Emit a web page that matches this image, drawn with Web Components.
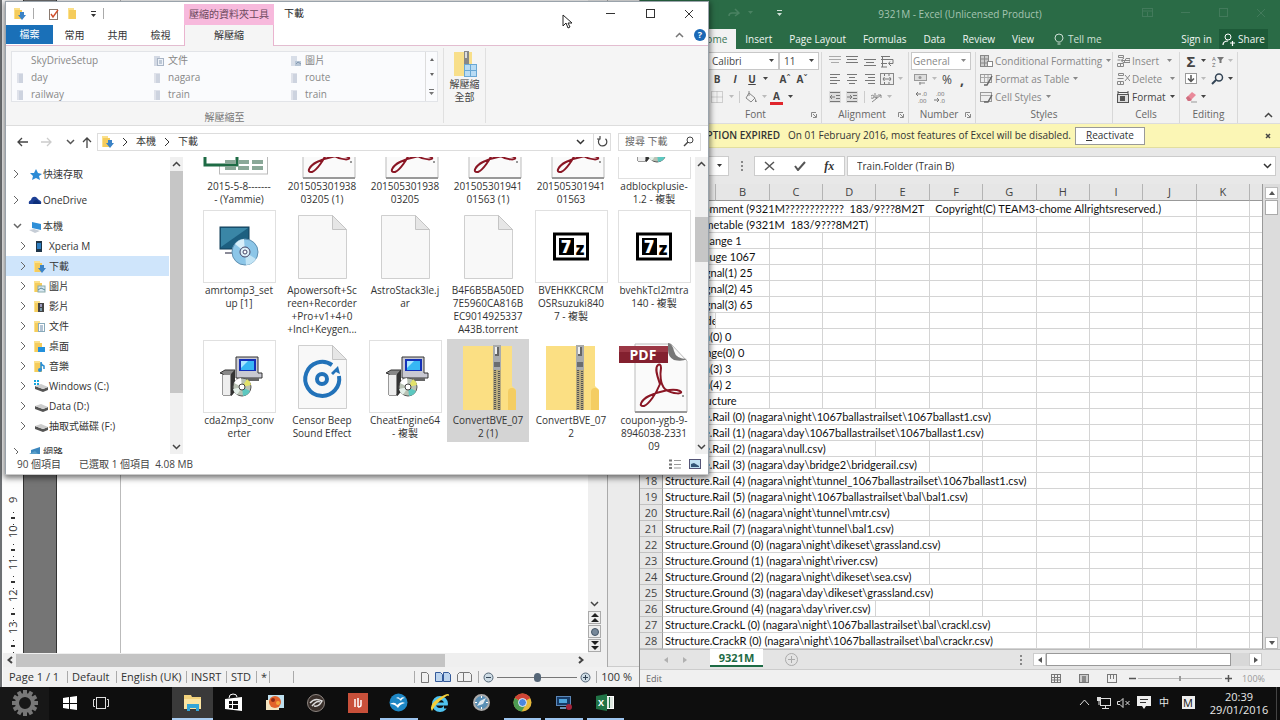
<!DOCTYPE html>
<html lang="zh-Hant">
<head>
<meta charset="utf-8">
<title>Desktop</title>
<style>
html,body{margin:0;height:100%}
body{font:10px/13px "Open Sans","Noto Sans CJK TC",sans-serif;color:#333;background:#6d7073;overflow:hidden}
</style>
</head>
<body>
<desk-top></desk-top>
<script>
const BASE = `*{box-sizing:border-box}button,input,select{font:inherit;color:inherit;border:0;padding:0;margin:0;background:none;outline:0;border-radius:0}
button{display:inline-flex;align-items:center;justify-content:center;white-space:nowrap}a{color:inherit;text-decoration:none}
input{min-width:0}`;
const define = (name, css, html) => customElements.define(name, class extends HTMLElement {
  connectedCallback() {
    if (this.shadowRoot) return;
    this.attachShadow({mode: 'open'}).innerHTML = `<style>${BASE}${css}</style>` + (typeof html === 'function' ? html(this) : html);
  }
});

/* ---------- icons: name -> [width, height, markup] ---------- */
const line = (d, c = '#555', w = 1) => `<path d="${d}" fill="none" stroke="${c}" stroke-width="${w}"/>`;
const rect = (x, y, w, h, f, s) => `<rect x="${x}" y="${y}" width="${w}" height="${h}" fill="${f || 'none'}"${s ? ` stroke="${s}"` : ''}/>`;
const folder = extra => `${rect(1, 1, 6, 11, '#fbe08a')}<path d="M2 3h7v9H2z" fill="#f5cc5c"/>${extra}`;
const paper = `<path d="M12.5 5.5h34l14 14v49h-48z" fill="#f8f8f8" stroke="#cfcfcf"/><path d="M46.5 5.5v14h14z" fill="#e6e6e6" stroke="#c4c4c4"/>`;
const zip = `<path d="M11 6h49v40l4 4v18q0 2-2 2H11z" fill="#fbdf83"/><path d="M60 48q4 0 4 4v18h-8V52q0-4 4-4z" fill="#f4cd62"/>
<rect x="41" y="5" width="8" height="65" fill="#b9ab7d"/><path d="M43 30v40M47 31v39" stroke="#555" stroke-width="2" stroke-dasharray="1 1"/><rect x="41" y="5" width="8" height="25" rx="1" fill="#a9abad"/><rect x="43" y="7" width="4" height="9" fill="#666"/><rect x="43" y="7" width="2" height="7" fill="#eee"/><rect x="42" y="22" width="6" height="5" fill="#6b6d70"/>`;
const pdfMark = '<path d="M40 25C36 28 40 38 42 44C38 54 31 64 26 66C20 67 23 60 31 56C42 51 55 48 62 51C67 54 55 55 47 49C42 44 42 34 43 28C43 24 41 24 40 25Z" fill="none" stroke="#8a1624" stroke-width="2"/><circle cx="65" cy="56" r="1" fill="#777"/>';
const pdf = `<path d="M17 4h36l16 17v51H17z" fill="#fafafa" stroke="#bbb"/><path d="M17 72h52" stroke="#999" stroke-width="2"/><path d="M50 3q4 0 6 8t13 8q-5 3-13 1-6-3-6-10z" fill="#777"/><rect x="1" y="6" width="49" height="17" fill="#83202f"/><path d="M1 6h49v6H1z" fill="#9b3745"/><text x="25" y="20" text-anchor="middle" font-family="Open Sans" font-size="14" font-weight="700" fill="#fff">PDF</text>${pdfMark}`;
const frame = '<rect x=".5" y=".5" width="72" height="72" fill="#fff" stroke="#e0e0e0"/>';
const installer = `${frame}<path d="M33 17h22v16h4v5H33z" fill="#c9c9d2" stroke="#333"/><path d="M36 19h17v12H36z" fill="#1431b8"/><path d="M38 21h13v9H38z" fill="#37b7f4"/><path d="M38 21h7l-7 7z" fill="#a8e6ff"/><path d="M34 38h22v3H34z" fill="#666"/>
<path d="M17 33l5-3h10l-3 4v21h-9V34z" fill="#888" stroke="#333"/><path d="M20 35h7v20h-7z" fill="#eee"/><path d="M28 34l4-4v22l-4 4z" fill="#333"/><circle cx="39" cy="47" r="9" fill="#b9c2b4" stroke="#555"/><path d="M39 47l-8-4a9 9 0 0 1 7-5z" fill="#fff"/><path d="M39 47l8 4a9 9 0 0 1-7 5z" fill="#5cc8c0"/><path d="M39 47l5-8a9 9 0 0 1 4 6z" fill="#e2e26a"/><path d="M39 47l-5 8a9 9 0 0 1-4-6z" fill="#e3efe8"/><circle cx="39" cy="47" r="3" fill="#fff" stroke="#444"/>`;
const seven = `${frame}<rect x="19.5" y="24" width="33" height="25" fill="#fff" stroke="#000" stroke-width="3"/><rect x="24" y="28" width="15" height="17" fill="#000"/><text x="31" y="43" text-anchor="middle" font-family="Open Sans" font-size="17" font-weight="800" fill="#fff">7</text><text x="45" y="45" text-anchor="middle" font-family="Open Sans" font-size="17" font-weight="800">z</text>`;
const gear = () => { let t = ''; for (let i = 0; i < 12; i++) t += `<rect x="12" y="1" width="4" height="6" fill="#777" transform="rotate(${i * 30} 14 14)"/>`; return t + '<circle cx="14" cy="14" r="8" fill="none" stroke="#777" stroke-width="4"/>'; };
const drive = '<path d="M2 6l8 3 5-2v3l-5 2-8-3z" fill="#555"/><path d="M2 6l6-2 7 3-5 2z" fill="#ccc"/>';
const alignLines = (a, c = '#777') => line(a.map((w, i) => `M${w[0]} ${i * 3 + 1.5}h${w[1]}`).join(''), c);
const ICONS = {
  caret: [5, 4, '<path d="M0 0h5L2.5 3z" fill="currentColor"/>'],
  right: [6, 10, line('M1 1l4 4-4 4', 'currentColor')],
  down: [9, 6, line('M1 1l3.5 3.5L8 1', 'currentColor', 1.5)],
  up: [9, 6, line('M1 5l3.5-3.5L8 5', 'currentColor', 1.5)],
  tri: [6, 4, '<path d="M0 4l3-4 3 4z" fill="currentColor"/>'],
  trd: [6, 4, '<path d="M0 0l3 4 3-4z" fill="currentColor"/>'],
  tris: [4, 3, '<path d="M0 3l2-3 2 3z" fill="#666"/>'], trds: [4, 3, '<path d="M0 0l2 3 2-3z" fill="#666"/>'],
  trl: [4, 6, '<path d="M4 0L0 3l4 3z" fill="currentColor"/>'],
  trr: [4, 6, '<path d="M0 0l4 3-4 3z" fill="currentColor"/>'],
  chl: [6, 8, line('M5 1L1.5 4 5 7', '#444', 2)],
  chr: [6, 8, line('M1 1l3.5 3L1 7', '#444', 2)],
  min: [9, 9, line('M0 4.5h9', 'currentColor')], max: [10, 9, rect(1.5, .5, 8, 8, '', 'currentColor')],
  close: [10, 10, line('M1 1l8 8M9 1l-8 8', 'currentColor')],
  closeb: [6, 6, line('M1 1l4 4M5 1L1 5', '#444', 1.5)],
  help: [12, 12, '<circle cx="6" cy="6" r="6" fill="#1b69b6"/><text x="6" y="9" text-anchor="middle" font-family="Open Sans" font-size="9" font-weight="700" fill="#fff">?</text>'],
  back: [12, 10, line('M6 1L2 5l4 4M2 5h10', '#444', 1.3)], fwd: [12, 10, line('M6 1l4 4-4 4M10 5H0', '#ccc', 1.3)],
  upar: [10, 12, line('M1 6l4-4 4 4M5 2v10', '#444', 1.3)],
  refresh: [11, 11, line('M3 2.5A4.2 4.2 0 1 0 8.5 2.7M3 0v3h-3', '#444', 1.2)],
  search: [11, 11, '<circle cx="7" cy="4" r="3" fill="none" stroke="#444"/>' + line('M5 6L1 10', '#444', 1.5)],
  dl: [13, 13, folder('<path d="M7 5h4v3h2l-4 5-4-5h2z" fill="#3b83c6"/>')],
  fold: [10, 13, folder('')],
  props: [12, 13, rect(1.5, 2.5, 8, 10, '#fff', '#8a7a70') + line('M3 7l2 3 5-7', '#d0502c', 1.4)],
  vbar: [1, 11, rect(0, 0, 1, 11, '#aaa')],
  star: [13, 13, '<path d="M7 1l2 4 4 1-3 2 1 4-4-2-4 2 1-4-3-3 4 0z" fill="#2b8bd6"/>'],
  cloud: [14, 11, '<path d="M1 9q-1-3 2-4 1-4 5-3l3 3q3 1 2 4z" fill="#1c3f94"/><path d="M5 9q0-4 4-4l4 4z" fill="#0c2f7a"/>'],
  pc: [13, 13, '<path d="M3 2l9 2v6l-9-2z" fill="#2f8fd8"/><path d="M0 10l5-1 6 2-5 2z" fill="#c6cdd6"/>'],
  phone: [10, 13, rect(3, 1, 6, 11, '#1f3548') + rect(4, 3, 4, 6, '#2f7fc2')],
  pic: [13, 13, folder(rect(5, 6, 7, 6, '#d8e8f2', '#8aa') + line('M5 10l3-2 4 2', '#5b8a9a'))],
  vid: [13, 13, folder(rect(5, 3, 6, 9, '#454545') + rect(7, 4, 2, 3, '#99b') + rect(7, 8, 2, 3, '#79a'))],
  docf: [13, 13, folder(rect(5.5, 3.5, 6, 8, '#fff', '#8ab') + line('M7 6h3M7 8h3M7 10h3', '#68a'))],
  desk: [13, 13, folder(rect(5, 7, 7, 5, '#2290dc'))],
  music: [13, 13, folder('<path d="M8 2v8M8 2q0 3 3 4v3" fill="none" stroke="#2a8fd6" stroke-width="1.5"/><circle cx="7" cy="10" r="2" fill="#2a8fd6"/>')],
  cdrv: [15, 13, drive + rect(1, 0, 2, 2, '#16a7de') + rect(4, 0, 2, 2, '#16a7de') + rect(1, 3, 2, 2, '#16a7de') + rect(4, 3, 2, 2, '#16a7de')],
  drv: [15, 13, drive],
  net: [13, 13, '<path d="M2 4l9-3v9l-9 1z" fill="#3c86bd"/><path d="M0 8l6-3 7 7H1z" fill="#5a9fc9"/>'],
  gfold: [10, 13, rect(1, 2, 6, 10, '#dfe2ea') + rect(3, 3, 4, 9, '#cdd3df')],
  gdoc: [12, 13, rect(1, 2, 6, 10, '#d3d9e4') + rect(4.5, 4.5, 6, 7, '#eef2f8', '#a9b5c6') + line('M6 7h3M6 9h3', '#8fa0b5')],
  gpic: [12, 13, rect(1, 2, 6, 10, '#d8dee8') + rect(5, 7, 6, 5, '#b8c6d6') + line('M6 10l2-2 3 2', '#8298b0')],
  zipall: [24, 28, rect(1, 2, 18, 24, '#f8df8a') + rect(11, 1, 5, 14, '#888') + rect(12, 2, 2, 6, '#ddd') + rect(11.5, 14.5, 6, 6, '#b9dcf4', '#6aa8d4') + rect(17.5, 14.5, 6, 6, '#b9dcf4', '#6aa8d4') + rect(11.5, 20.5, 6, 6, '#b9dcf4', '#6aa8d4') + rect(17.5, 20.5, 6, 6, '#b9dcf4', '#6aa8d4')],
  xls: [73, 73, `<rect x="16.5" y="5" width="48" height="63" fill="#fff" stroke="#bbb"/><rect x="2" y="14" width="32" height="45" fill="#fff" stroke="#1e6b45" stroke-width="3"/>` + [[22, 54], [35, 54], [49, 54], [22, 60], [35, 60], [49, 60]].map(p => rect(p[0], p[1], 11, 4, '#8aa898')).join('')],
  pdf: [73, 73, pdf], paper: [73, 73, paper], zip: [73, 73, zip], installer: [73, 73, installer], seven: [73, 73, seven],
  setup: [73, 73, frame + '<rect x="17" y="17" width="29" height="22" fill="#1d5f80" stroke="#123f58"/><path d="M18 37V18h27z" fill="#3a86a6"/><path d="M30 39v4M22 43h14" stroke="#667" stroke-width="1.5"/><circle cx="42" cy="42" r="13" fill="#8cc6e8" stroke="#5f8fb0"/><path d="M42 42L32 34a13 13 0 0 1 9-5z" fill="#d8effa"/><path d="M42 42l11 7a13 13 0 0 1-10 6z" fill="#c2e4f5"/><circle cx="42" cy="42" r="5" fill="#dff1fa" stroke="#446"/><circle cx="42" cy="42" r="2" fill="#fff" stroke="#446"/>'],
  censor: [73, 73, paper + '<path d="M46 25A17 17 0 1 0 53 36" fill="none" stroke="#2272b9" stroke-width="4"/><path d="M45 33l7-7 2 8-4-2-3 3z" fill="#2272b9"/><circle cx="36" cy="39" r="5" fill="none" stroke="#2272b9" stroke-width="4"/>'],
  vdet: [13, 10, line('M0 1.5h3M0 5.5h3M0 9h3', '#777', 2) + line('M5 1.5h7M5 5.5h7M5 9h7', '#999')],
  vbig: [13, 11, rect(.5, .5, 11, 9, '#bfe0f2', '#557') + '<path d="M2 8V5l3-1 5 3v1z" fill="#357"/>'],
  cursor: [10, 15, '<path d="M1 1v11l3-3 2 5 2-1-2-4h4z" fill="#fff" stroke="#222"/>'],
  /* office */
  redo: [12, 9, line('M10 5H4q-3 0-3 3M7 1l4 4-4 3', '#4a8262', 1.5)],
  cust: [5, 6, '<path d="M0 0h5v1H0zM0 3h5L2.5 6z" fill="currentColor"/>'],
  ropt: [11, 9, rect(.5, .5, 10, 8, '', 'currentColor') + line('M1 3h9M5.5 8V4', 'currentColor')],
  bulb: [10, 13, line('M3.5 9Q1 7 1 5a4 4 0 0 1 8 0q0 2-2.5 4zM3.5 11h3', '#cfe0d6')],
  person: [13, 13, '<circle cx="6" cy="4" r="3" fill="none" stroke="#fff"/>' + line('M1 12q0-4 5-4M8 10h5M10.5 8v5', '#fff', 1.2)],
  a1: [12, 12, line('M0 1.5h12M0 4.5h12M2 7.5h8', '#aaa')], a2: [12, 12, alignLines([[0, 12], [1, 10], [0, 12]])], a3: [12, 12, line('M0 4.5h12M2 7.5h8M0 10.5h12', '#777')],
  l1: [10, 12, alignLines([[0, 10], [0, 7], [0, 10], [0, 7]])], l2: [10, 12, alignLines([[0, 10], [2, 6], [0, 10], [2, 6]])], l3: [10, 12, alignLines([[0, 10], [3, 7], [0, 10], [3, 7]])],
  wrap: [13, 13, line('M0 1.5h9M0 4.5h12v4H8M9 6.5L7.5 8.5 10 11M0 8.5h6M0 12h6M1.5 1v11', '#777')],
  merge: [14, 13, rect(.5, .5, 13, 11, '#eee', '#888') + line('M3 6h8M4.5 4L3 6l1.5 2M9.5 4L11 6 9.5 8M4.5 1v2M9 1v2M4.5 9v2M9 9v2', '#777')],
  ind1: [12, 12, rect(0, 0, 12, 12, '#ddd') + line('M1 1.5h10M7 4.5h4M7 7.5h4M1 10.5h10M6 6H1M3 4L1 6l2 2', '#777')],
  ind2: [12, 12, rect(0, 0, 12, 12, '#ddd') + line('M1 1.5h10M7 4.5h4M7 7.5h4M1 10.5h10M1 6h5M4 4l2 2-2 2', '#777')],
  orient: [13, 12, line('M2 11L11 4M8 4h3v3M1 5q3-2 3 1 0 2-3 1M5 2v5q3 0 2-3', '#888')],
  money: [14, 12, rect(.5, 1.5, 12, 6, '#ddd', '#999') + '<circle cx="6" cy="4.5" r="1.5" fill="#999"/>' + line('M5 10h6M6 9v3', '#888')],
  dec1: [12, 12, line('M5 3H0M2 1L0 3l2 2', '#777') + '<text x="6" y="5" font-family="Open Sans" font-size="6" fill="#666">.0</text><text x="2" y="12" font-family="Open Sans" font-size="6" fill="#666">.00</text>'],
  dec2: [12, 12, line('M0 9h5M3 7l2 2-2 2', '#777') + '<text x="2" y="5" font-family="Open Sans" font-size="6" fill="#666">.00</text><text x="6" y="12" font-family="Open Sans" font-size="6" fill="#666">.0</text>'],
  bord: [12, 12, '<path d="M.5.5h11v11H.5zM6 .5v11M.5 6h11" fill="none" stroke="#aaa" stroke-dasharray="1 1"/>'],
  bucket: [12, 12, line('M4 2l6 5-4 4-5-4zM4 5V0', '#888') + '<path d="M10 7l2 4h-2z" fill="#888"/>'],
  launch: [6, 6, line('M.5 5V.5H5M2 2l3 3M5.5 2v3.5H2', '#888')],
  cf: [13, 13, rect(.5, .5, 8, 11, '#ccc', '#888') + line('M4.5 1v10M1 4h7M1 8h7', '#888') + rect(7.5, 6.5, 5, 5, '#fff', '#888')],
  ft: [13, 13, rect(.5, 1.5, 11, 8, '#eee', '#999') + line('M1 4.5h10M4.5 2v7M8 2v7', '#aaa') + line('M12 3L7 12H4', '#666', 1.5)],
  cs: [13, 13, rect(.5, 1.5, 11, 9, '#eee', '#999') + line('M1 4.5h10', '#aaa') + line('M12 4L8 11H4', '#666', 1.5)],
  ins: [13, 13, line('M1.5.5h5v2h-5zM.5 8.5h6v3h-6zM.5 5h3M5 5.5h8M9 3.5h4v4H7zM7 3L4 5.5 7 8M3.5 9v3', '#888')],
  del: [13, 13, line('M1.5.5h5v2h-5zM.5 8.5h6v3h-6zM.5 5.5h6M8 2l5 6M13 2L8 8M3.5 9v3', '#888')],
  fmt: [13, 13, rect(.5, 3.5, 11, 8, '#ddd', '#555') + rect(3, 5, 5, 5, '#555') + line('M1 1.5h10M1 0v3M11 0v3', '#555')],
  sort: [12, 12, '<text x="0" y="6" font-family="Open Sans" font-size="6" fill="#666">A</text><text x="0" y="12" font-family="Open Sans" font-size="6" fill="#666">Z</text><path d="M5 2h7L9.5 5v3h-2V5z" fill="#777"/>'],
  fill: [12, 12, rect(.5, .5, 11, 10, '#fff', '#999') + line('M6 2v6M3 5.5L6 8.5 9 5.5', '#555', 1.5)],
  find: [13, 12, '<circle cx="8" cy="4.5" r="3.5" fill="none" stroke="#345" stroke-width="1.5"/>' + line('M5 7L1 11', '#345', 2)],
  erase: [13, 12, '<path d="M1 7l6-6 4 3-6 6H3z" fill="#e98a9a"/><path d="M1 7l2-2 4 4-2 1H3z" fill="#cf6f80"/>' + line('M6 11h6', '#999')],
  x: [11, 10, line('M1 1l9 8M10 1L1 9', '#555', 1.5)], ok: [12, 10, line('M1 5l3 4 7-8', '#555', 2)],
  dots: [2, 10, rect(0, 0, 2, 2, '#888') + rect(0, 4, 2, 2, '#888') + rect(0, 8, 2, 2, '#888')],
  plusc: [13, 13, '<circle cx="6.5" cy="6.5" r="6" fill="none" stroke="#aaa"/>' + line('M3 6.5h7M6.5 3v7', '#aaa')],
  v1: [10, 9, rect(.5, .5, 9, 8, '', '#777') + line('M3.5 0v9M6.5 0v9M0 3.5h10M0 6h10', '#777')],
  v2: [10, 9, rect(.5, .5, 9, 8, '#ccc', '#777') + rect(3, 2, 4, 6, '#888')], v3: [10, 9, rect(.5, .5, 9, 8, '', '#777') + line('M3.5 0v5M6.5 0v5', '#777')],
  minus: [7, 7, line('M0 3.5h7', '#555', 1.5)], plus: [7, 7, line('M0 3.5h7M3.5 0v7', '#555', 1.5)],
  /* writer */
  pg: [8, 11, line('M.5.5h5l2 2v8h-7z', '#777')], pg2: [16, 10, '<path d="M.5.5h5l2 2v7h-7zM8.5.5h5l2 2v7h-7z" fill="#bcd4ee" stroke="#345a9a"/>'],
  pg3: [15, 10, line('M2.5.5h4v9h-6v-7zM6.5.5h6l2 2v7h-8z', '#777')],
  zm: [11, 11, '<circle cx="5.5" cy="5.5" r="4.5" fill="#cddbe4" stroke="#567"/>' + line('M3 5.5h5', '#345')],
  zp: [11, 11, '<circle cx="5.5" cy="5.5" r="4.5" fill="#cddbe4" stroke="#567"/>' + line('M3 5.5h5M5.5 3v5', '#345')],
  uu: [8, 9, '<path d="M0 4l4-4 4 4zM0 9l4-4 4 4z" fill="#222"/>'], dd: [8, 9, '<path d="M0 0h8L4 4zM0 5h8L4 9z" fill="#222"/>'],
  ball: [8, 8, '<circle cx="4" cy="4" r="3.5" fill="#789" stroke="#456"/>'],
  /* taskbar */
  gear: [28, 28, gear()],
  win: [14, 14, '<path d="M0 2l6-1v6H0zM7 1l7-1v7H7zM0 8h6v5l-6-1zM7 8h7v6l-7-1z" fill="#fff"/>'],
  task: [16, 14, rect(3.5, 1.5, 9, 11, '', '#ddd') + line('M2 3.5H.5v7H2M14 3.5h1.5v7H14', '#ddd')],
  tfold: [20, 18, '<path d="M1 1h7l1 2h9v12H1z" fill="#f1d27c"/><path d="M1 5h17v10H1z" fill="#fbe5a2"/><path d="M4 17v-7h12v7h-3v-3H7v3z" fill="#34a6d8"/>'],
  store: [18, 20, '<path d="M0 6l17-2v14l-17-2z" fill="#fff"/><path d="M4 5q0-4 4-4t4 3" fill="none" stroke="#fff"/><path d="M4 8h3v3H4zM8 8h5v3H8zM4 12h3v3H4zM8 12h5v4H8z" fill="#111"/>'],
  photos: [20, 18, rect(3, 1, 16, 13, '#bfe0ee') + rect(1, 6, 13, 10, '#f3e4c0') + '<circle cx="10" cy="8" r="6" fill="#e2622a"/><circle cx="8" cy="6" r="2" fill="#8d2a18"/><circle cx="13" cy="9" r="2" fill="#f3a63a"/>'],
  eye: [18, 18, '<circle cx="9" cy="9" r="8.5" fill="#3a302b" stroke="#8d8580"/><path d="M3 9q5-6 12-2-3 6-8 5M5 12q5-6 8-4" stroke="#ddd" fill="none" stroke-width="1.5"/>'],
  red: [20, 20, rect(0, 0, 20, 20, '#c8503a') + line('M7 6v8M10 5v9M13 7v5q0 2-3 2', '#fff', 1.5)],
  oo: [19, 19, '<circle cx="9.5" cy="9.5" r="9" fill="#1d86c4"/><path d="M7 5q3-2 4 1 2-3 5-1-3 0-4 3-2-3-5-3zM1 11q5-3 7 1 4-4 8-2-5 1-7 5-3-4-8-4z" fill="#fff"/>'],
  ie: [20, 20, '<circle cx="10" cy="11" r="6" fill="none" stroke="#4fc3f0" stroke-width="4"/><path d="M6 11h11" stroke="#4fc3f0" stroke-width="3"/><path d="M14 12.500h6v3h-6z" fill="#0e0e0e"/><path d="M2 18Q-2 12 9 5T19 3q-1-2-8 4T2 18z" fill="#f3cf3a"/>'],
  saf: [17, 17, '<circle cx="8.5" cy="8.5" r="7.5" fill="#5a8fb5" stroke="#aaa" stroke-width="2"/><path d="M4 12l3-5 6-3-3 6z" fill="#dfe8ee"/>' + line('M8.5 2v2M8.5 13v2M2 8.5h2M13 8.5h2', '#fff')],
  chrome: [19, 19, '<circle cx="9.5" cy="9.5" r="9" fill="#e7b93b"/><path d="M9.5 9.5L1.700 5A9 9 0 0 1 17.300 5z" fill="#cf4436"/><path d="M1.700 5a9 9 0 0 0 7 13.500l4-7z" fill="#4d9b52"/><circle cx="9.5" cy="9.5" r="4" fill="#4c86e0" stroke="#eee"/>'],
  rdp: [18, 16, rect(1.5, 1.5, 14, 9, '#173a66', '#5b87b8') + rect(4, 4, 8, 4, '#4fa5dc') + rect(5, 12, 6, 2, '#6a8fb5') + '<circle cx="14" cy="12" r="3" fill="#a3243b"/>'],
  xl: [18, 17, rect(9.5, 2.5, 8, 12, '#dfe9e2', '#fff') + line('M13.5 3v11', '#217346') + '<path d="M0 2l11-2v17L0 15z" fill="#217346"/><text x="5" y="12" text-anchor="middle" font-family="Open Sans" font-size="9" font-weight="700" fill="#fff">X</text>'],
  tup: [11, 7, line('M1 6l4.5-5L10 6', '#ddd')],
  tnet: [14, 12, rect(3.5, 1.5, 10, 7, '', '#ddd') + rect(0, 0, 4, 4, '#ddd') + line('M5 11.5h7M8.5 9v2M2 4v4', '#ddd')],
  mute: [14, 10, line('M.5 3.5H3l3-3v9l-3-3H.5zM8.5 3l4 4M12.5 3l-4 4', '#ddd')],
  note: [14, 13, '<path d="M0 0h14v10H9l-2 3-2-3H0z" fill="#eee"/>' + line('M3 3.5h8M3 6.5h6', '#333')],
};
customElements.define('ui-icon', class extends HTMLElement {
  connectedCallback() {
    if (this.shadowRoot) return;
    const [w, h, m] = ICONS[this.getAttribute('name')];
    this.attachShadow({mode: 'open'}).innerHTML = `<style>:host{display:inline-flex;flex:none}svg{display:block}</style><svg width="${w}" height="${h}" viewBox="0 0 ${w} ${h}" aria-hidden="true">${m}</svg>`;
  }
});
const ic = n => `<ui-icon name="${n}"></ui-icon>`;

/* vertical scrollbar: the three numbers are the shares before, of, and after the thumb */
define('scroll-bar', `:host{display:flex;flex-direction:column;align-items:stretch;background:#f0f0f0;color:#444;width:13px}
button{height:14px;flex:none}.t{background:#c6c6c6}`, el => {
  const [a, b, c] = el.getAttribute('share').split(' ');
  return `<button aria-label="Up">${ic('up')}</button><div style="flex:${a}"></div><div class="t" style="flex:${b}"></div><div style="flex:${c}"></div><button aria-label="Down">${ic('down')}</button>`;
});

/* ---------- file explorer ---------- */
define('explorer-ribbon', `:host{display:block}
.title{display:grid;grid-template-columns:178px 90px 1fr auto;height:23px;align-items:center}
.qat{display:flex;gap:7px;align-items:center;padding-left:7px}
.ctx{background:#f7b9dc;color:#6d4a5e;align-self:end;height:21px;line-height:20px;text-align:center}
.name{padding-left:10px;color:#222}.win{display:flex}.win button{width:39px;height:23px;color:#333}
.tabs{display:flex;height:21px;border-bottom:1px solid #e3bdd0;align-items:stretch}
.tabs button{width:43px}.tabs .file{width:47px;height:19px;background:#1a70b8;color:#fff;margin-right:0}
.tabs .on{width:90px;background:#f5f5f5;border:1px solid #eab4cf;border-width:0 1px;margin:0 0 -1px 2px}
.r{margin-left:auto;display:flex;align-items:center;gap:10px;padding-right:2px;color:#777}
.rib{display:flex;height:80px;background:#f5f5f5;border-bottom:1px solid #ddd;color:#777}
.g{width:438px;padding:4px 5px 0;border-right:1px solid #e0e0e0;margin:2px 0 2px 0;text-align:center}
.gal{display:flex;height:51px;border:1px solid #e2e4e8;background:#fafbfd;margin-top:-1px}
.items{flex:1;display:grid;grid-template-columns:repeat(3,137px);grid-auto-rows:17px;text-align:left;overflow:hidden}
.items button{justify-content:flex-start;padding-left:4px;color:#888}.items span{width:15px;display:flex}
.sc{width:12px;border-left:1px solid #ddd;display:flex;flex-direction:column;justify-content:space-around;align-items:center}
.cap{margin-top:9px}.x{width:42px;border-right:1px solid #e0e0e0;margin:2px 0;display:flex;flex-direction:column;align-items:center;justify-content:flex-start;padding-top:2px;white-space:normal;color:#444}`,
`<div class="title"><div class="qat">${ic('dl')}${ic('vbar')}<span></span>${ic('props')}${ic('fold')}<span></span>${ic('cust')}${ic('vbar')}</div>
<div class="ctx">壓縮的資料夾工具</div><div class="name">下載</div>
<div class="win"><button aria-label="Minimize">${ic('min')}</button><button aria-label="Maximize">${ic('max')}</button><button aria-label="Close">${ic('close')}</button></div></div>
<div class="tabs"><button class="file">檔案</button><button>常用</button><button>共用</button><button>檢視</button><button class="on">解壓縮</button><div class="r">${ic('up')}${ic('help')}</div></div>
<div class="rib"><div class="g"><div class="gal"><div class="items">${[['', 'SkyDriveSetup'], ['gdoc', '文件'], ['gpic', '圖片'], ['gfold', 'day'], ['gfold', 'nagara'], ['gfold', 'route'], ['gfold', 'railway'], ['gfold', 'train'], ['gfold', 'train']].map(([i, t]) => `<button><span>${i && ic(i)}</span>${t}</button>`).join('')}</div>
<div class="sc">${ic('tris')}${ic('trds')}${ic('cust')}</div></div><div class="cap">解壓縮至</div></div>
<button class="x">${ic('zipall')}<span>解壓縮<br>全部</span></button></div>`);

define('address-bar', `:host{display:flex;height:31px;align-items:center;padding:0 7px 0 10px;color:#333}
.n{width:25px;justify-content:flex-start}.s{width:18px;color:#555;justify-content:flex-start;margin-right:-2px}.box{flex:1;display:flex;align-items:center;height:18px;border:1px solid #ddd;padding-left:3px;gap:8px;margin-left:5px}
.box span{flex:1}.ref{width:17px;height:16px;border-left:1px solid #ddd}.find{width:83px;height:18px;border:1px solid #ddd;margin-left:7px;display:flex;align-items:center;padding:0 6px}
.find input{flex:1;width:10px}.find input::placeholder{color:#666}`,
`<button class="n" aria-label="Back">${ic('back')}</button><button class="n" aria-label="Forward">${ic('fwd')}</button><button class="s" aria-label="Recent">${ic('down')}</button><button aria-label="Up">${ic('upar')}</button>
<div class="box">${ic('dl')}${ic('right')}<a href="#">本機</a>${ic('right')}<a href="#">下載</a><span></span>${ic('down')}<button class="ref" aria-label="Refresh">${ic('refresh')}</button></div>
<label class="find"><input type="search" placeholder="搜尋 下載" aria-label="搜尋 下載">${ic('search')}</label>`);

define('nav-item', `:host{display:block;height:20px}a{display:flex;height:20px;align-items:center;padding-left:7px;width:163px}
:host([sub]) a{padding-left:14px}:host([on]) a{background:#cfe5fb}:host([gap]){margin-bottom:6px}
.c{width:14px;display:flex;color:#666}:host([sub]) .c{width:13px}.i{width:16px;display:flex}:host(:not([sub])) .i{justify-content:center}`,
el => `<a href="#"><span class="c">${ic(el.hasAttribute('open') ? 'down' : 'right')}</span><span class="i">${ic(el.getAttribute('icon'))}</span><slot></slot></a>`);

define('file-tile', `:host{display:block;text-align:center;padding:1px 0 2px;align-self:start;color:#333}
:host([on]){background:#d4d4d4}ui-icon{margin-bottom:1px;vertical-align:top}`, el => `${ic(el.getAttribute('icon'))}<div><slot></slot></div>`);

define('file-explorer', `:host{display:flex;flex-direction:column;background:#fff;border:1px solid #9aa3ab;border-bottom-color:#ccc;box-shadow:0 2px 6px 1px rgba(0,0,0,.55)}
.body{flex:1;display:flex;min-height:0}.nav{width:164px;padding-top:7px;overflow:hidden}
.files{flex:1;overflow:hidden}.grid{display:grid;grid-template-columns:repeat(6,82px);column-gap:1px;row-gap:1px;padding-left:15px;margin-top:-52px}
.st{display:flex;height:20px;align-items:center;padding:0 6px 0 11px;gap:18px;color:#444}.st span:nth-child(2){flex:1}.st div{display:flex;gap:7px}
.cur{position:absolute;left:556px;top:12px}`,
`<explorer-ribbon></explorer-ribbon><address-bar></address-bar>
<div class="body"><nav class="nav"><nav-item icon="star" gap>快速存取</nav-item><nav-item icon="cloud" gap>OneDrive</nav-item><nav-item icon="pc" open>本機</nav-item>
${[['phone', 'Xperia M'], ['dl', '下載', 'on'], ['pic', '圖片'], ['vid', '影片'], ['docf', '文件'], ['desk', '桌面'], ['music', '音樂'], ['cdrv', 'Windows (C:)'], ['drv', 'Data (D:)'], ['drv', '抽取式磁碟 (F:)', 'gap']].map(r => `<nav-item icon="${r[0]}" sub ${r[2] || ''}>${r[1]}</nav-item>`).join('')}<nav-item icon="net">網路</nav-item></nav>
<scroll-bar share="0 223 47"></scroll-bar>
<div class="files"><div class="grid">${[
['xls', '2015-5-8-------<br>- (Yammie)'], ['pdf', '201505301938<br>03205 (1)'], ['pdf', '201505301938<br>03205'], ['pdf', '201505301941<br>01563 (1)'], ['pdf', '201505301941<br>01563'], ['installer', 'adblockplusie-<br>1.2 - 複製'],
['setup', 'amrtomp3_set<br>up [1]'], ['paper', 'Apowersoft+Sc<br>reen+Recorder<br>+Pro+v1+4+0<br>+Incl+Keygen...'], ['paper', 'AstroStack3le.j<br>ar'], ['paper', 'B4F6B5BA50ED<br>7E5960CA816B<br>EC9014925337<br>A43B.torrent'], ['seven', 'BVEHKKCRCM<br>OSRsuzuki840<br>7 - 複製'], ['seven', 'bvehkTcl2mtra<br>140 - 複製'],
['installer', 'cda2mp3_conv<br>erter'], ['censor', 'Censor Beep<br>Sound Effect'], ['installer', 'CheatEngine64<br>- 複製'], ['zip', 'ConvertBVE_07<br>2 (1)', 'on'], ['zip', 'ConvertBVE_07<br>2'], ['pdf', 'coupon-ygb-9-<br>8946038-2331<br>09']
].map(r => `<file-tile icon="${r[0]}" ${r[2] || ''}>${r[1]}</file-tile>`).join('')}</div></div>
<scroll-bar share="46 46 179"></scroll-bar></div>
<div class="st"><span>90 個項目</span><span>已選取 1 個項目&nbsp; 4.08 MB</span><div>${ic('vdet')}${ic('vbig')}</div></div>
<div class="cur">${ic('cursor')}</div>`);

/* ---------- spreadsheet ---------- */
define('ribbon-group', `:host{display:flex;flex-direction:column;border-right:1px solid #d8d8d8;margin-top:3px;padding:0 4px;flex:none;width:var(--w)}
.rows{display:grid;grid-auto-rows:18px;flex:1}.l{display:flex;height:15px;align-items:center;margin-bottom:1px;color:#666}.l span{flex:1;text-align:center}`,
el => `<div class="rows"><slot></slot></div><div class="l"><span>${el.getAttribute('label')}</span>${el.hasAttribute('more') ? ic('launch') : ''}</div>`);
const b = (c, w = 18, s = '') => `<button style="width:${w}px;${s}">${c}</button>`;
const car = (w = 10, dim) => b(ic('caret'), w, dim ? 'color:#bbb' : '');
define('sheet-ribbon', `:host{display:block}
.title{display:grid;grid-template-columns:1fr auto 1fr;height:29px;background:#2a6b46;color:#a5c4b1;align-items:center}
.q{display:flex;align-items:center;gap:8px;padding:0 0 4px 88px}.q ui-icon:nth-child(2){color:#4a8262}.q ui-icon:last-child{color:#cfe0d6;margin-left:16px}
.win{display:flex;justify-content:flex-end;color:#427a5b;padding-bottom:4px}.win button{width:38px;height:20px}
.tabs{display:flex;height:20px;background:#2a6b46;color:#f0f6f2}.tabs button{padding:0 8px 0 9px}.tabs .f{width:50px}.tabs .on{background:#f2f2f2;color:#3a7555;padding:0 9px}
.tabs .tell{gap:4px;color:#cfe0d6;margin-left:3px}.tabs .in{margin-left:auto;padding:0 7px}.tabs .sh{background:#1d5a38;width:49px;padding:0;gap:3px;margin-right:12px}
.rib{display:flex;height:75px;background:#f2f2f2;border-bottom:1px solid #ddd;color:#444}
.row{display:flex;align-items:center}.dim{color:#888}
.sel{display:grid;height:18px;align-items:center;border:1px solid #c8c8c8;background:#fff}.sel>*{grid-area:1/1}.sel select{appearance:none;height:16px;padding-left:4px;width:100%}.sel ui-icon{justify-self:end;margin-right:4px;pointer-events:none}
.t{justify-content:flex-start;gap:2px}.t ui-icon:last-child{margin-left:2px}.wide ui-icon:last-child{margin-left:6px}.sep{width:1px;height:12px;background:#ccc;margin:0 2px 0 3px}
.bar{display:flex;height:24px;background:#fbf6b5;align-items:center;color:#333;border-bottom:1px solid #e2dea0}.bar b{width:140px;text-align:right;font-weight:600;white-space:nowrap;margin-right:8px}
.bar button.r{width:70px;height:18px;border:1px solid #999;background:#fff;margin:0 auto 0 4px}.bar button.c{width:24px}
.fx{display:flex;height:36px;background:#e8e8e8;align-items:center;padding:0 4px 0 0}
.fx .nb{width:89px;display:grid;height:20px;background:#fff;border:1px solid #ccc;align-items:center}.nb>*{grid-area:1/1}.nb ui-icon{justify-self:end;margin-right:6px}.nb input{width:100%}
.fx .d{width:25px;display:flex;justify-content:center}.btn{display:flex;width:91px;height:20px;border:1px solid #ccc;background:#fff;margin-right:2px}.btn button{flex:1}
.fb{flex:1;display:flex;height:20px;border:1px solid #ccc;background:#fff;align-items:center;padding:0 3px 0 9px}.fb input{flex:1}
i.fxi{font:italic 700 12px "Liberation Serif",serif}`,
`<div class="title"><div class="q">${ic('redo')}${ic('caret')}${ic('cust')}</div><div>9321M - Excel (Unlicensed Product)</div>
<div class="win"><button aria-label="Ribbon options">${ic('ropt')}</button><button aria-label="Minimize">${ic('min')}</button><button aria-label="Maximize">${ic('max')}</button><button aria-label="Close">${ic('close')}</button></div></div>
<div class="tabs"><button class="f" aria-label="File"></button><button class="on">Home</button><button>Insert</button><button>Page Layout</button><button>Formulas</button><button>Data</button><button>Review</button><button>View</button><button class="tell">${ic('bulb')}Tell me</button><button class="in">Sign in</button><button class="sh">${ic('person')}Share</button></div>
<div class="rib"><ribbon-group label="" style="--w:56px"></ribbon-group>
<ribbon-group label="Font" more style="--w:126px"><div class="row"><label class="sel" style="width:79px"><select aria-label="Font" style="padding-left:11px"><option>Calibri</option></select>${ic('caret')}</label><label class="sel" style="width:40px"><select aria-label="Size"><option>11</option></select>${ic('caret')}</label></div>
<div class="row" style="padding-left:8px">${b('<b>B</b>')}${b('<b><i>I</i></b>')}${b('<b><u>U</u></b>', 16)}${car()}<span style="width:6px"></span>${b('<b>A</b>ˆ')}${b('<b>A</b>ˇ', 16)}</div>
<div class="row" style="padding-left:8px">${b(ic('bord'))}${car(10, 1)}<span class="sep"></span>${b(ic('bucket'))}${car(8, 1)}${b('<b>A</b>', 13, 'border-bottom:3px solid #e0262c;height:15px;line-height:12px;margin:0 2px')}${car()}</div></ribbon-group>
<ribbon-group label="Alignment" more style="--w:87px"><div class="row">${b(ic('a1'), 17)}${b(ic('a2'))}${b(ic('a3'), 17)}${b(ic('wrap'))}</div>
<div class="row">${b(ic('l1'), 17)}${b(ic('l2'))}${b(ic('l3'), 17)}${b(ic('merge'))}${car(8, 1)}</div>
<div class="row">${b(ic('ind1'), 17)}${b(ic('ind2'))}<span class="sep"></span>${b(ic('orient'))}${car(8, 1)}</div></ribbon-group>
<ribbon-group label="Number" more style="--w:67px"><div class="row"><label class="sel dim" style="width:60px;margin-left:-2px"><select aria-label="Number format" style="padding-left:1px"><option>General</option></select>${ic('caret')}</label></div>
<div class="row">${b(ic('money'), 16)}${car(10, 1)}${b('%', 16, 'font-size:12px')}${b('<b>,</b>', 14, 'font-size:14px')}</div><div class="row">${b(ic('dec1'))}${b(ic('dec2'))}</div></ribbon-group>
<ribbon-group label="Styles" style="--w:137px" class="dim"><button class="t">${ic('cf')}Conditional Formatting${ic('caret')}</button><button class="t">${ic('ft')}Format as Table${ic('caret')}</button><button class="t">${ic('cs')}Cell Styles${ic('caret')}</button></ribbon-group>
<ribbon-group label="Cells" style="--w:67px"><button class="t dim wide">${ic('ins')}Insert${ic('caret')}</button><button class="t dim wide">${ic('del')}Delete${ic('caret')}</button><button class="t">${ic('fmt')}Format${ic('caret')}</button></ribbon-group>
<ribbon-group label="Editing" style="--w:58px"><div class="row">${b('<b style="font-size:15px">Σ</b>', 14)}${car(11)}${b(ic('sort'), 17)}${car(8, 1)}</div><div class="row">${b(ic('fill'), 14)}${car(11, 1)}${b(ic('find'), 17)}${car(8)}</div><div class="row">${b(ic('erase'), 14)}${car(11)}</div></ribbon-group>
<button aria-label="Collapse" style="margin:60px 7px 0 auto;height:12px">${ic('up')}</button></div>
<div class="bar"><b>SUBSCRIPTION EXPIRED</b><span>On 01 February 2016, most features of Excel will be disabled.</span><button class="r"><span><u>R</u>eactivate</span></button><button class="c" aria-label="Close">${ic('closeb')}</button></div>
<div class="fx"><label class="nb"><input aria-label="Name box">${ic('caret')}</label><span class="d">${ic('dots')}</span><div class="btn"><button aria-label="Cancel">${ic('x')}</button><button aria-label="Enter">${ic('ok')}</button><button aria-label="Function"><i class="fxi">fx</i></button></div>
<label class="fb"><input value="Train.Folder (Train B)" aria-label="Formula">${ic('down')}</label></div>`);

const CELLS = [['Route.Comment (9321M????????????&nbsp; 183/9???8M2T &nbsp;&nbsp; Copyright(C) TEAM3-chome Allrightsreserved.)', 10], ['Route.Timetable (9321M&nbsp; 183/9???8M2T)', 4], ['Route.Change 1', 2], ['Route.Gauge 1067', 2], ['Route.Signal(1) 25', 2], ['Route.Signal(2) 45', 2], ['Route.Signal(3) 65', 2], ['Train.Folder (Train B)', 1], ['Train.Run(0) 0', 2], ['Train.Flange(0) 0', 2], ['Train.Run(3) 3', 2], ['Train.Run(4) 2', 2], ['With Structure', 2],
['Structure.Rail (0) (nagara\\night\\1067ballastrailset\\1067ballast1.csv)', 7], ['Structure.Rail (1) (nagara\\day\\1067ballastrailset\\1067ballast1.csv)', 7], ['Structure.Rail (2) (nagara\\null.csv)', 4], ['Structure.Rail (3) (nagara\\day\\bridge2\\bridgerail.csv)', 5], ['Structure.Rail (4) (nagara\\night\\tunnel_1067ballastrailset\\1067ballast1.csv)', 7], ['Structure.Rail (5) (nagara\\night\\1067ballastrailset\\bal\\bal1.csv)', 6], ['Structure.Rail (6) (nagara\\night\\tunnel\\mtr.csv)', 5], ['Structure.Rail (7) (nagara\\night\\tunnel\\bal1.csv)', 5],
['Structure.Ground (0) (nagara\\night\\dikeset\\grassland.csv)', 6], ['Structure.Ground (1) (nagara\\night\\river.csv)', 5], ['Structure.Ground (2) (nagara\\night\\dikeset\\sea.csv)', 5], ['Structure.Ground (3) (nagara\\day\\dikeset\\grassland.csv)', 6], ['Structure.Ground (4) (nagara\\day\\river.csv)', 4], ['Structure.CrackL (0) (nagara\\night\\1067ballastrailset\\bal\\crackl.csv)', 7], ['Structure.CrackR (0) (nagara\\night\\1067ballastrailset\\bal\\crackr.csv)', 7]];
/* row numbers start below the window that lies over the sheet */
const FIRST_VISIBLE_ROW = 18;
define('sheet-grid', `:host{display:flex;flex:1;min-height:0;background:#e4e4e4;overflow:hidden}
.w{flex:1;overflow:hidden;border-right:1px solid #999;min-width:0}
table{border-collapse:separate;border-spacing:0;table-layout:fixed;width:100%;background:#fff;color:#222}
th{font-weight:400;background:#e6e6e6;height:17px;padding:0;border-right:1px solid #b4b4b4;border-bottom:1px solid #999;color:#444;font-size:11px;line-height:14px}
tbody th{height:16px;border-bottom-color:#c2c2c2;border-right-color:#999}
td{height:16px;padding:0 0 0 2px;border-right:1px solid #d4d4d4;border-bottom:1px solid #d4d4d4;font:11px/15px Lato,sans-serif;color:#111;white-space:nowrap;overflow:hidden}
.r{width:23px}.z{width:12px}th:last-child,td:last-child{border-right:0}
.s{width:17px;display:flex;flex-direction:column;align-items:center;background:#dcdcdc;color:#555;padding-top:3px}.s button{width:13px;height:12px;background:#fff;border:1px solid #bbb}.s div{width:13px;height:15px;background:#fff;border:1px solid #aaa;margin:1px 0 auto}`,
`<div class="w"><table><thead><tr><th class="r"></th>${' BCDEFGHIJK'.split('').map(c => `<th>${c}</th>`).join('')}<th class="z"></th></tr></thead><tbody>
${CELLS.map(([t, n], i) => `<tr><th>${i + 1 < FIRST_VISIBLE_ROW ? '' : i + 1}</th><td colspan="${n}">${t}</td>${'<td></td>'.repeat(12 - n)}</tr>`).join('')}</tbody></table></div>
<div class="s"><button aria-label="Up">${ic('tri')}</button><div></div><button aria-label="Down">${ic('trd')}</button></div>`);

define('excel-window', `:host{display:flex;flex-direction:column;background:#f0f0f0}
.tb{display:flex;height:20px;background:#e4e4e4;border-top:1px solid #bbb;align-items:center;color:#b0b0b0}
.tb .a{width:70px;display:flex;gap:15px;justify-content:center}
.tab{width:53px;height:18px;margin-top:-3px;background:#fff;color:#1e6b45;font-weight:700;font-size:11px;border-bottom:2px solid #1e6b45}
.add{margin:0 auto 0 22px}.h{display:flex;width:229px;height:13px;color:#555;background:#d8d8d8;margin:0 18px 0 11px}.h button{width:13px;background:#fff;border:1px solid #ccc;flex:none}.h div{width:185px;border:1px solid #999;background:#fff;margin-right:auto}
.st{display:flex;height:18px;align-items:center;padding:0 15px 0 6px;border-top:1px solid #ccc;color:#666;font-size:9px}.st span:first-child{flex:1}
.st button{width:28px}.st .z{width:12px}input[type=range]{appearance:none;width:84px;height:9px;background:linear-gradient(#bbb,#bbb) center/100% 1px no-repeat}
input::-webkit-slider-thumb{appearance:none;width:2px;height:5px;background:#999}.p{margin-left:8px;color:#999}`,
`<sheet-ribbon></sheet-ribbon><sheet-grid></sheet-grid>
<div class="tb"><div class="a">${ic('trl')}${ic('trr')}</div><button class="tab">9321M</button><button class="add" aria-label="New sheet">${ic('plusc')}</button>${ic('dots')}
<div class="h"><button aria-label="Left">${ic('trl')}</button><div></div><button aria-label="Right">${ic('trr')}</button></div></div>
<div class="st"><span>Edit</span><button aria-label="Normal">${ic('v1')}</button><button aria-label="Page layout">${ic('v2')}</button><button aria-label="Page break">${ic('v3')}</button><button class="z" aria-label="Zoom out">${ic('minus')}</button><input type="range" aria-label="Zoom"><button class="z" aria-label="Zoom in">${ic('plus')}</button><span class="p">100%</span></div>`);

/* ---------- word processor ---------- */
define('ruler-mark', `:host{display:flex;flex-direction:column;align-items:center;justify-content:space-between;height:32px}
i{width:1px;height:1px;background:#333}i.m{width:4px;height:2px}span{writing-mode:vertical-rl;transform:rotate(180deg);height:14px;line-height:16px;text-align:center}`,
`<span><slot></slot></span><i></i><i class="m"></i><i></i>`);
define('writer-window', `:host{display:flex;flex-direction:column;background:#efefef;border-left:1px solid #fafafa;border-right:1px solid #888}
.top{flex:1;display:flex;min-height:0}.left{flex:1;display:flex;flex-direction:column;min-width:0}.doc{flex:1;display:flex;min-height:0;overflow:hidden}
.ru{width:20px;background:#fdfdfd;display:flex;flex-direction:column;justify-content:flex-end;font-size:11px;color:#333;align-items:center}
.dk{width:34px;background:#757575;border:1px solid #333;border-width:0 1px 0 1px}.pg{flex:1;background:#fff;padding-left:63px}.pg div{height:100%;border-left:1px solid #bbb}
.vs{width:13px;display:flex;flex-direction:column;justify-content:flex-end;gap:1px;padding-bottom:1px;color:#444}.vs button{height:13px;border:1px solid #aaa}.vs button:first-child{border:0}
.hs{display:flex;height:14px;align-items:center}.hs button{width:13px}.hs div{width:429px;height:13px;background:#c4c4c4;margin-right:auto}.hs button:last-child{margin-right:14px}
.pad{width:7px;border-right:1px solid #aaa}.side{width:31px;background:#ebebeb;border-bottom:1px solid #ccc}
.st{display:flex;height:20px;align-items:center;font-size:11px;color:#333;background:#f1f1f1;padding-right:7px}.st span{padding-left:4px;border-left:1px solid #aaa;height:12px;line-height:12px;white-space:nowrap;flex:none}
.st span:first-child{border:0;padding-left:6px}.g{display:flex;gap:6px;align-items:center;padding:0 6px;border-left:1px solid #aaa;margin-left:auto;height:12px}.z{margin-left:0;padding:0 5px 0 4px;gap:3px}
input[type=range]{appearance:none;width:80px;height:9px;background:linear-gradient(#777,#777) center/100% 1px no-repeat}input::-webkit-slider-thumb{appearance:none;width:7px;height:9px;border-radius:4px;background:#567}`,
`<div class="top"><div class="left"><div class="doc"><div class="ru">${[9, 10, 11, 12, 13].map(n => `<ruler-mark>${n}</ruler-mark>`).join('')}</div><div class="dk"></div><div class="pg"><div></div></div>
<div class="vs"><button aria-label="Down">${ic('down')}</button><button aria-label="Previous page">${ic('uu')}</button><button aria-label="Navigation">${ic('ball')}</button><button aria-label="Next page">${ic('dd')}</button></div></div>
<div class="hs"><button aria-label="Left">${ic('chl')}</button><div></div><button aria-label="Right">${ic('chr')}</button></div></div><div class="pad"></div><div class="side"></div></div>
<div class="st"><span style="width:64px">Page 1 / 1</span><span style="width:49px">Default</span><span style="width:70px">English (UK)</span><span style="width:40px">INSRT</span><span style="width:30px">STD</span><span style="width:13px">*</span><span style="width:24px"></span><span></span>
<div class="g">${ic('pg')}${ic('pg2')}${ic('pg3')}</div><div class="g z">${ic('zm')}<input type="range" aria-label="Zoom">${ic('zp')}</div><span>100 %</span></div>`);

/* ---------- taskbar ---------- */
define('task-bar', `:host{display:flex;height:33px;background:#0e0e0e;color:#e8e8e8;align-items:stretch;flex:none}
button{border-bottom:2px solid transparent;flex:none}.g{width:49px;background:#171717}.w{width:42px}.t{width:20px}
.apps{display:grid;grid-auto-flow:column;grid-auto-columns:1fr;width:454px;margin-left:61px}
.run{border-image:linear-gradient(90deg,transparent 10%,#9cc4ee 10% 90%,transparent 90%) 2}.on{background:#3a3a3a;border-color:#a9cdf2}
.tray{margin-left:auto;display:flex}.tray button{width:20px}.m{background:#eee;color:#111;width:13px;height:13px;line-height:13px;font-size:11px}.tray .clk{width:74px;flex-direction:column;font-size:11px;line-height:13px}.e{width:4px;border-left:1px solid #444}`,
`<button class="g" aria-label="Settings">${ic('gear')}</button><button class="w" aria-label="Start">${ic('win')}</button><button class="t" aria-label="Task view">${ic('task')}</button>
<div class="apps">${[['tfold', 'on'], ['store'], ['photos'], ['eye'], ['red'], ['oo', 'run'], ['ie'], ['saf'], ['chrome', 'run'], ['rdp', 'run'], ['xl', 'run']].map(r => `<button class="${r[1] || ''}" aria-label="${r[0]}">${ic(r[0])}</button>`).join('')}</div>
<div class="tray"><button aria-label="Hidden icons">${ic('tup')}</button><button aria-label="Network">${ic('tnet')}</button><button aria-label="Volume">${ic('mute')}</button><button aria-label="Notifications">${ic('note')}</button><button>中</button><button style="width:28px"><span class="m">M</span></button><button class="clk"><span>20:39</span><span>29/01/2016</span></button><div class="e"></div></div>`);

define('desk-top', `:host{display:flex;flex-direction:column;height:100vh}
main{flex:1;position:relative;overflow:hidden}
writer-window{position:absolute;inset:0 50% 0 2px}excel-window{position:absolute;inset:0 0 0 50%}file-explorer{position:absolute;left:5px;top:1px;width:55%;height:69%}`,
`<main><writer-window></writer-window><excel-window></excel-window><file-explorer></file-explorer></main><task-bar></task-bar>`);
</script>
</body>
</html>
